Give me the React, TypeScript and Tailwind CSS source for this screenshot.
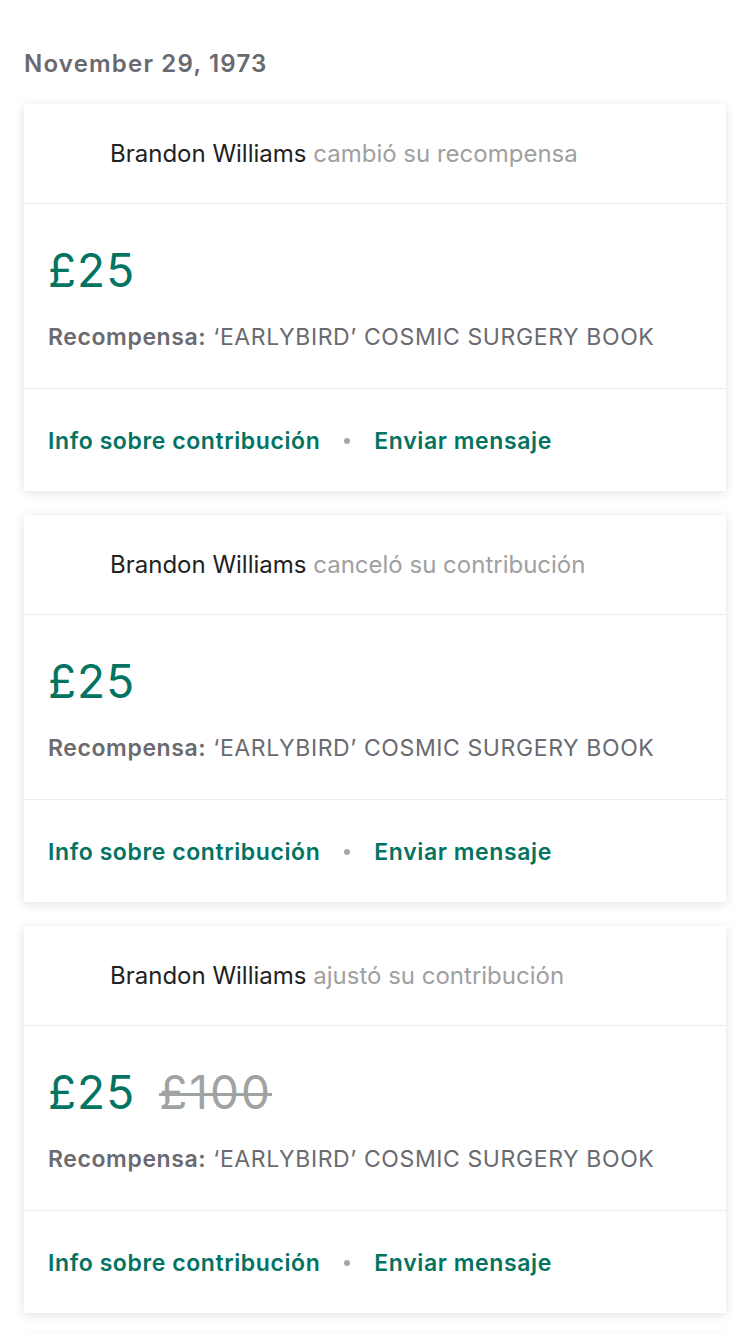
import React from "react";

const font = { fontFamily: "Inter, 'Liberation Sans', sans-serif" };

type Item = { action: string; old?: string };

const items: Item[] = [
  { action: "cambió su recompensa" },
  { action: "canceló su contribución" },
  { action: "ajustó su contribución", old: "£100" },
  { action: "cambió su recompensa" },
];

function Card({ item }: { item: Item }) {
  return (
    <div className="bg-white shadow-[0_2px_10px_rgba(0,0,0,0.12)]">
      <div className="h-[99px] flex items-center pl-[24px]">
        <div className="w-[48px] h-[48px] mr-[14px]" />
        <div className="text-[24px] leading-[32px]">
          <span className="text-[#222222]">Brandon Williams</span>{" "}
          <span className="text-[#a0a0a0]">{item.action}</span>
        </div>
      </div>
      <div className="h-px bg-[#ececf0]" />
      <div className="pl-[24px] pt-[43px] pb-[37px]">
        <div className="flex items-center text-[46px] leading-[46px] tracking-[1px]">
          <span className="text-[#037362]">£25</span>
          {item.old && (
            <span className="ml-[24px] text-[#a0a3a3] tracking-[2px] line-through decoration-[3px]">
              {item.old}
            </span>
          )}
        </div>
        <div className="mt-[30px] text-[23px] leading-[28px] text-[#6a6a70] tracking-[0.6px]">
          <span className="font-semibold">Recompensa:</span>{" "}
          <span>‘EARLYBIRD’ COSMIC SURGERY BOOK</span>
        </div>
      </div>
      <div className="h-px bg-[#ececf0]" />
      <div className="h-[102px] flex items-center pl-[24px] pt-[2px] text-[23px] tracking-[0.6px] font-semibold text-[#037362]">
        <span>Info sobre contribución</span>
        <span className="mx-[24px] w-[6px] h-[6px] rounded-full bg-[#a6a6a6]" />
        <span>Enviar mensaje</span>
      </div>
    </div>
  );
}

export default function App() {
  return (
    <div style={font} className="h-[1334px] overflow-hidden bg-white px-[24px] pt-[48px]">
      <div className="text-[24px] leading-[32px] font-semibold tracking-[1.2px] text-[#69696f] mb-[24px]">
        November 29, 1973
      </div>
      <div className="flex flex-col gap-[24px]">
        {items.slice(0, 3).map((it, i) => (
          <Card key={i} item={it} />
        ))}
        <div className="h-[40px] bg-white shadow-[0_2px_10px_rgba(0,0,0,0.12)]" />
      </div>
    </div>
  );
}
